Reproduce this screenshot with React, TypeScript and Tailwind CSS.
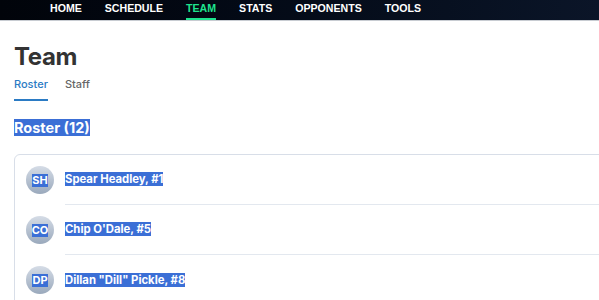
import React from "react";

const Sel = ({ children, className = "" }: { children: React.ReactNode; className?: string }) => (
  <span className={"bg-[#3b6fd6] text-white " + className}>{children}</span>
);

const players = [
  { i: "SH", n: "Spear Headley, #1" },
  { i: "CO", n: "Chip O'Dale, #5" },
  { i: "DP", n: 'Dillan "Dill" Pickle, #8' },
];

export default function App() {
  const nav = ["HOME", "SCHEDULE", "TEAM", "STATS", "OPPONENTS", "TOOLS"];
  return (
    <div className="w-[599px] h-[300px] overflow-hidden bg-white" style={{ fontFamily: "Inter, 'Liberation Sans', sans-serif" }}>
      <div className="h-[21px] border-b border-[#c8ccd2] bg-gradient-to-r from-[#01040a] to-[#0b1528] flex pl-[50px] gap-[23px]" style={{ fontFamily: "'Liberation Sans', Arial, sans-serif" }}>
        {nav.map((n) => (
          <div key={n} className={"relative h-full text-[10.6px] font-bold leading-[17px] " + (n === "TEAM" ? "text-[#1ee48e]" : "text-white")}>
            {n}
            {n === "TEAM" && <div className="absolute left-0 right-0 bottom-0 h-[2px] bg-[#1ee48e]" />}
          </div>
        ))}
      </div>
      <div className="pl-[14px]">
        <h1 className="mt-[20px] text-[24px] font-bold leading-[32px] text-[#333] tracking-[-0.4px]">Team</h1>
        <div className="flex gap-[17px] mt-[3px] text-[11px] font-medium">
          <div className="text-[#2b7bc4] border-b-2 border-[#2b7bc4] pb-[7px] leading-[16px]">Roster</div>
          <div className="text-[#666] leading-[16px]">Staff</div>
        </div>
        <div className="mt-[17px] text-[14.5px] font-bold leading-[19px]">
          <Sel>Roster (12)</Sel>
        </div>
        <div className="mt-[17px] -mr-[20px] border border-[#d8dee8] rounded-[6px] pl-[11px]">
          {players.map((p, idx) => (
            <div key={p.i} className="flex items-center h-[50px]">
              <div className="w-[28px] h-[28px] rounded-full bg-gradient-to-b from-[#d5dce6] to-[#9aa9bc] flex items-center justify-center text-[11px] font-bold shrink-0">
                <Sel className="leading-[13px]">{p.i}</Sel>
              </div>
              <div className={"flex-1 ml-[11px] h-full flex items-center " + (idx < players.length - 1 ? "border-b border-[#e3e8ef]" : "")}>
                <span className="text-[11.3px] font-bold leading-[15px]">
                  <Sel>{p.n}</Sel>
                </span>
              </div>
            </div>
          ))}
        </div>
      </div>
    </div>
  );
}
